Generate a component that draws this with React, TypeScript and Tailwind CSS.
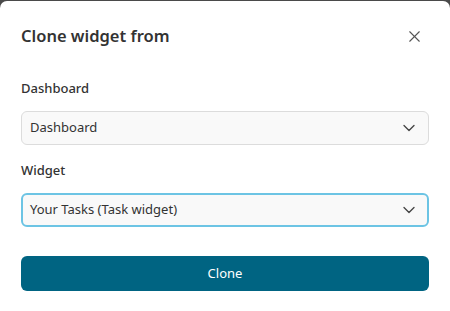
import { ChevronDown, X } from 'lucide-react'

export default function App() {
  return (
    <div className="w-[450px] h-[311px] bg-[#4a4a4a] pt-px overflow-hidden" style={{ fontFamily: '"Noto Sans", "Open Sans", sans-serif' }}>
      <div className="bg-white rounded-[7px] h-[320px] px-[21px]">
        {/* Header */}
        <div className="flex items-center justify-between pt-[17px] h-[53px]">
          <h2 className="text-[16.5px] font-semibold text-[#333]">Clone widget from</h2>
          <button className="text-[#555] mr-[5px]">
            <X size={19} strokeWidth={1.4} />
          </button>
        </div>

        {/* Dashboard */}
        <div className="mt-[24px]">
          <label className="block text-[13px] font-medium text-[#333] leading-5">Dashboard</label>
          <div className="mt-[13px] h-[34px] rounded-[6px] border border-[#dcdcdc] bg-[#f9f9f9] flex items-center justify-between pl-[8px] pr-[9px]">
            <span className="text-[13px] text-[#333]">Dashboard</span>
            <ChevronDown size={20} strokeWidth={1.6} className="text-[#444]" />
          </div>
        </div>

        {/* Widget */}
        <div className="mt-[15px]">
          <label className="block text-[13px] font-medium text-[#333] leading-5">Widget</label>
          <div className="mt-[13px] h-[34px] rounded-[6px] border-2 border-[#6cc4e4] bg-[#f9f9f9] flex items-center justify-between pl-[7px] pr-[8px]">
            <span className="text-[13px] text-[#333]">Your Tasks (Task widget)</span>
            <ChevronDown size={20} strokeWidth={1.6} className="text-[#444]" />
          </div>
        </div>

        <button className="mt-[29px] w-full h-[35px] rounded-[6px] bg-[#006482] text-white text-[13px]">
          Clone
        </button>
      </div>
    </div>
  )
}
